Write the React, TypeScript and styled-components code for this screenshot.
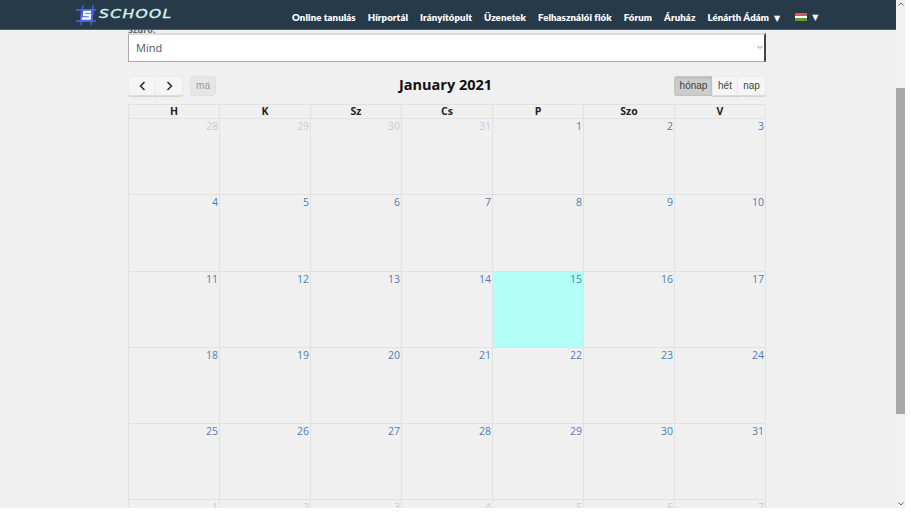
import React from "react";
import styled, { createGlobalStyle } from "styled-components";

const Global = createGlobalStyle`
  html, body { margin: 0; padding: 0; background: #fff; overflow: hidden; }
  * { box-sizing: border-box; }
`;

const Stage = styled.div`
  width: 905px; height: 508px; display: flex; overflow: hidden; background: #f0f0f0;
  font-family: "Open Sans", sans-serif;
`;
const Page = styled.div`flex: 1; min-width: 0; display: flex; flex-direction: column;`;
const Header = styled.header`
  height: 30px; flex: none; background: #273a4a; border-bottom: 1px solid #4d5d6a;
  display: flex; align-items: center; position: relative; z-index: 2;
`;
const Logo = styled.div`
  display: flex; align-items: center; margin-left: 75px; width: 97px; gap: 2px; height: 28px;
`;
const LogoText = styled.span`
  font-family: "DejaVu Sans", sans-serif; font-style: oblique; font-weight: 400; font-size: 11.5px;
  letter-spacing: 1px; color: #d5f0ee; line-height: 1; white-space: nowrap;
  -webkit-text-stroke: 0.35px #d5f0ee;
  transform: scaleX(1.35); transform-origin: left center;
`;
const Nav = styled.nav`
  margin-left: 120px; display: flex; align-items: center; gap: 12px; padding-top: 5px;
`;
const NavItem = styled.a`
  font-family: "Lato", sans-serif; font-weight: 800; font-size: 9.600px; letter-spacing: 0.090px; color: #fff; white-space: nowrap;
`;
const Caret = styled.span`
  font-size: 8px; margin-left: 5px; font-family: "DejaVu Sans", sans-serif; vertical-align: 0;
`;
const Flag = styled.span`
  display: flex; align-items: center; gap: 5px; margin-left: 3px; color: #fff; font-size: 8px; font-family: "DejaVu Sans", sans-serif;
`;
const FlagStripes = styled.span`
  display: block; width: 12px; height: 8px; background: linear-gradient(#e0525c 0 33%, #fff 33% 66%, #5f9a35 66%);
`;
const Main = styled.main`flex: 1; min-height: 0; overflow: hidden; padding: 0 130px 0 128px;`;
const Shifted = styled.div`margin-top: -4px;`;
const Label = styled.div`height: 7px; font-size: 9px; line-height: 7px; font-weight: 700; color: #666;`;
const SelectBox = styled.div`
  height: 29px; display: flex; align-items: center; justify-content: space-between; padding: 0 1px 2px 7px;
  background: #fff; font-size: 11px; color: #555;
  border-style: solid; border-width: 2px 2px 1px 1px; border-color: #dadada #444 #aaa #aaa;
`;
const Chevron = styled.svg`width: 6px; height: 5px; color: #888;`;
const Toolbar = styled.div`
  display: flex; align-items: center; justify-content: space-between; margin-top: 13px; height: 21px;
`;
const Left = styled.div`display: flex; gap: 7px; width: 89px;`;
const Group = styled.div`display: flex;`;
const Btn = styled.div<{ $active?: boolean; $first?: boolean; $last?: boolean; $w: number }>`
  width: ${p => p.$w}px; height: 20px; display: flex; align-items: center; justify-content: center;
  font-family: "Liberation Sans", sans-serif; font-size: 10px; color: #444;
  background: ${p => (p.$active ? "#cccccc" : "#f5f5f5")};
  border: 1px solid ${p => (p.$active ? "#c8c8c8" : "#ececec")}; border-bottom-color: ${p => (p.$active ? "#c0c0c0" : "#dcdcdc")};
  margin-left: ${p => (p.$first ? 0 : -1)}px;
  border-radius: ${p => (p.$first ? "3px 0 0 3px" : p.$last ? "0 3px 3px 0" : "0")};
  box-shadow: ${p => (p.$active ? "inset 0 1px 2px rgba(0,0,0,.12)" : "0 1px 1px rgba(0,0,0,.12)")};
`;
const Today = styled.div`
  width: 26px; height: 20px; display: flex; align-items: center; justify-content: center;
  font-family: "Liberation Sans", sans-serif; font-size: 10px; color: #999; background: #e6e6e6;
  border: 1px solid #e2e2e2; border-radius: 3px;
`;
const Title = styled.h2`
  margin: 0 0 2px; font-size: 14.500px; line-height: 19px; font-weight: 700; color: #111;
`;
const Grid = styled.div`
  margin-top: 8px; display: grid; grid-template-columns: repeat(7, 1fr);
  border-left: 1px solid #e2e2e2;
`;
const Head = styled.div`
  height: 15px; border-top: 1px solid #e2e2e2; border-right: 1px solid #e2e2e2; border-bottom: 1px solid #e2e2e2;
  text-align: center; font-size: 10.500px; line-height: 13px; font-weight: 700; color: #222;
`;
const Cell = styled.div<{ $today?: boolean }>`
  height: 76.250px; border-right: 1px solid #e2e2e2; border-bottom: 1px solid #e2e2e2; padding: 0 1px 0 0;
  text-align: right; line-height: 11px; background: ${p => (p.$today ? "#b3fff8" : "transparent")};
`;
const Day = styled.span<{ $muted?: boolean }>`
  font-size: 10.500px; line-height: 11px; color: #4a7fb5; opacity: ${p => (p.$muted ? 0.3 : 1)};
`;
const Scrollbar = styled.div`
  width: 9px; flex: none; background: #f1f1f1; display: flex; flex-direction: column; align-items: center; justify-content: space-between; position: relative;
`;
const Thumb = styled.div`
  position: absolute; top: 88px; left: 0; width: 9px; height: 326px; background: #a8a8a8;
`;
const Arrow = styled.svg`width: 6px; height: 4px; color: #666; margin: 2px 0;`;

const LogoMark = () => (
  <svg width="22" height="22" viewBox="0 0 22 22">
    <path d="M8 1L6 21M18 1L16 21M1 6h20M1 17h20" stroke="#4f66e6" strokeWidth="1.300" />
    <path d="M6 5h13l-1.300 13H4.700z" fill="#4f63dc" />
    <path d="M16 7.800H9.300l-.3 3.200h6l-.3 3.500H6.800" fill="none" stroke="#edf6fd" strokeWidth="2.300" />
  </svg>
);

const heads = ["H", "K", "Sz", "Cs", "P", "Szo", "V"];
const days: { d: number; m?: boolean }[] = [
  { d: 28, m: true }, { d: 29, m: true }, { d: 30, m: true }, { d: 31, m: true },
  ...Array.from({ length: 31 }, (_, i) => ({ d: i + 1 })),
  ...Array.from({ length: 7 }, (_, i) => ({ d: i + 1, m: true })),
];
const nav = ["Online tanulás", "Hírportál", "Irányítópult", "Üzenetek", "Felhasználói fiók", "Fórum", "Áruház"];

export default function App() {
  return (
    <Stage>
      <Global />
      <Page>
        <Header>
          <Logo>
            <LogoMark />
            <LogoText>SCHOOL</LogoText>
          </Logo>
          <Nav>
            {nav.map(n => <NavItem key={n}>{n}</NavItem>)}
            <NavItem>Lénárth Ádám<Caret>▼</Caret></NavItem>
            <Flag><FlagStripes />▼</Flag>
          </Nav>
        </Header>
        <Main>
          <Shifted>
            <Label>Szűrő:</Label>
            <SelectBox>
              Mind
              <Chevron viewBox="0 0 6 5"><path d="M.5 1l2.500 2.500L5.500 1" fill="none" stroke="currentColor" /></Chevron>
            </SelectBox>
            <Toolbar>
              <Left>
                <Group>
                  <Btn $first $w={28}><svg width="9" height="10" viewBox="0 0 9 10"><path d="M6.500 1L2.500 5l4 4" fill="none" stroke="#222" strokeWidth="1.400" /></svg></Btn>
                  <Btn $last $w={28}><svg width="9" height="10" viewBox="0 0 9 10"><path d="M2.500 1l4 4-4 4" fill="none" stroke="#222" strokeWidth="1.400" /></svg></Btn>
                </Group>
                <Today>ma</Today>
              </Left>
              <Title>January 2021</Title>
              <Group>
                <Btn $first $active $w={39}>hónap</Btn>
                <Btn $w={26}>hét</Btn>
                <Btn $last $w={29}>nap</Btn>
              </Group>
            </Toolbar>
            <Grid>
              {heads.map(h => <Head key={h}>{h}</Head>)}
              {days.map((c, i) => (
                <Cell key={i} $today={!c.m && c.d === 15}><Day $muted={c.m}>{c.d}</Day></Cell>
              ))}
            </Grid>
          </Shifted>
        </Main>
      </Page>
      <Scrollbar>
        <Arrow viewBox="0 0 6 4"><path d="M.5 3.500L3 1l2.500 2.500" fill="none" stroke="currentColor" /></Arrow>
        <Thumb />
        <Arrow viewBox="0 0 6 4"><path d="M.5.500L3 3l2.500-2.500" fill="none" stroke="currentColor" /></Arrow>
      </Scrollbar>
    </Stage>
  );
}
